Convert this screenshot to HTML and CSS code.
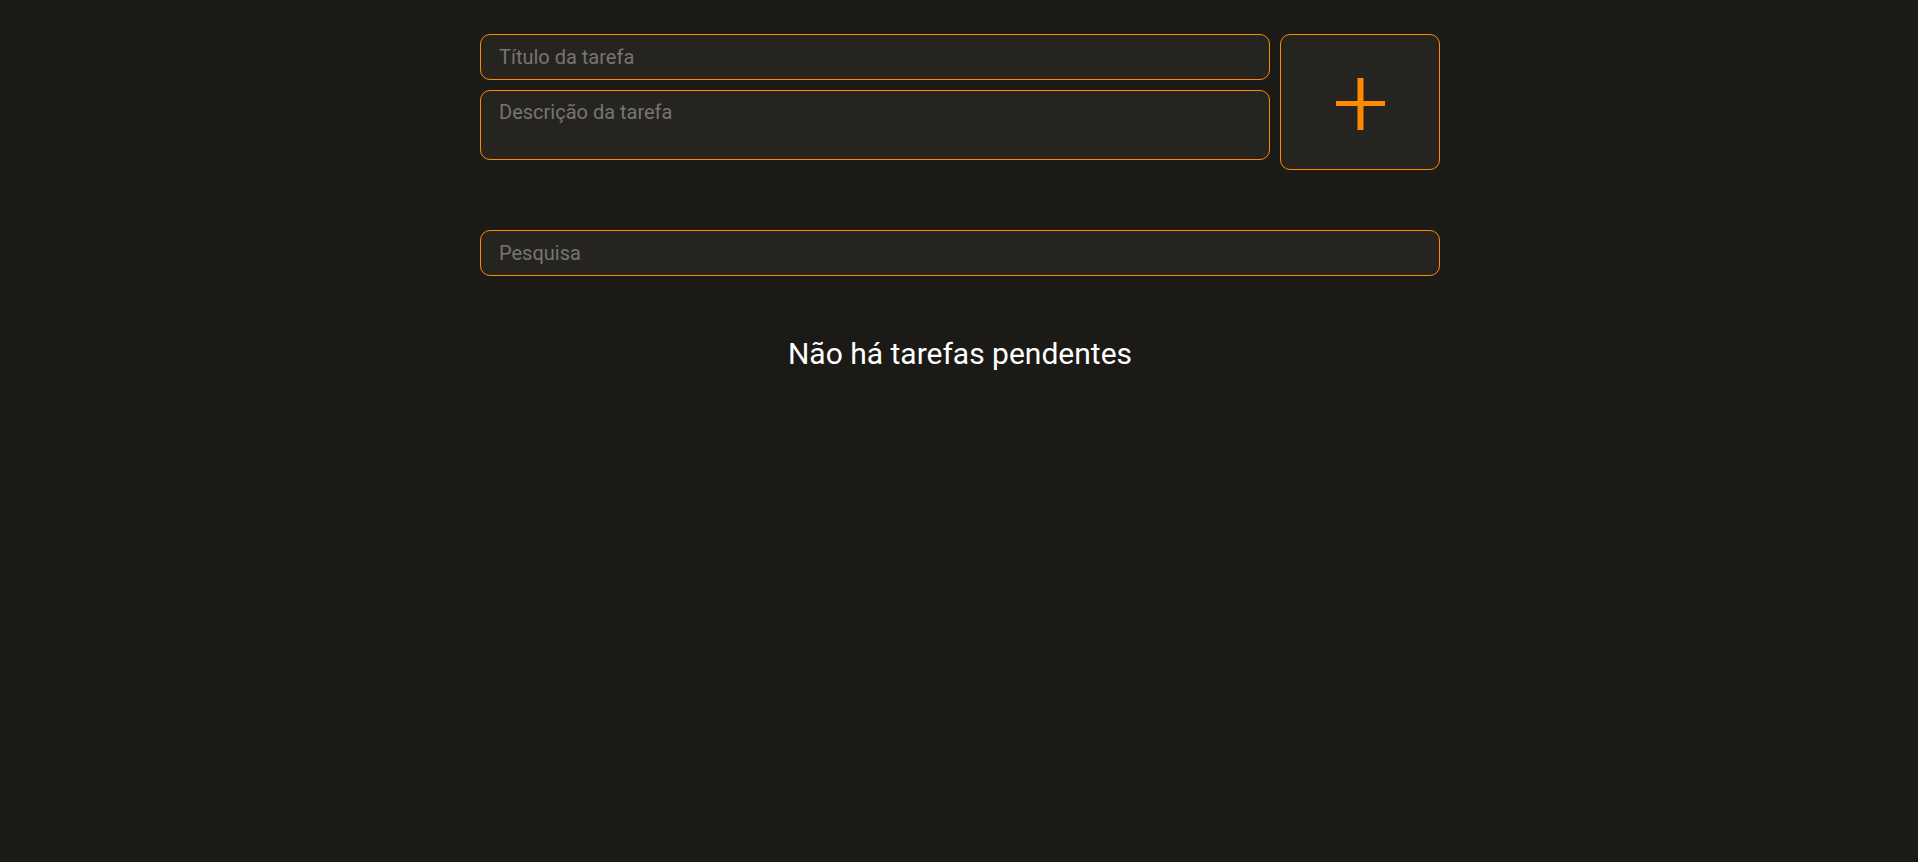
FILE: index.html
```html
<!DOCTYPE html>
<html lang="pt">
<head>
<meta charset="utf-8">
<title>Tarefas</title>
<link rel="stylesheet" href="styles.css">
</head>
<body>
<main class="app">
  <form class="new-task">
    <div class="fields">
      <input class="field title" type="text" placeholder="Título da tarefa">
      <textarea class="field desc" placeholder="Descrição da tarefa"></textarea>
    </div>
    <button class="add" type="button" aria-label="Adicionar">
      <svg width="49" height="52" viewBox="0 0 49 52"><rect x="0" y="23" width="49" height="5" fill="#ff8a00"/><rect x="21.5" y="0" width="6" height="52" fill="#ff8a00"/></svg>
    </button>
  </form>
  <input class="field search" type="text" placeholder="Pesquisa">
  <h2 class="empty">Não há tarefas pendentes</h2>
</main>
</body>
</html>
```
FILE: styles.css
```css
* { box-sizing: border-box; }
html, body {
  margin: 0;
  background: #1c1a17;
  font-family: Roboto, "Liberation Sans", sans-serif;
}
body { padding-left: 2px; }
.app {
  width: 960px;
  margin: 0 auto;
  padding-top: 34px;
  display: flex;
  flex-direction: column;
}
.new-task {
  display: flex;
  gap: 10px;
  align-items: flex-start;
}
.fields {
  flex: 1;
  display: flex;
  flex-direction: column;
  gap: 10px;
}
.field {
  display: block;
  width: 100%;
  background: #262420;
  border: 1px solid #ff8a00;
  border-radius: 10px;
  color: #ddd;
  font-family: Roboto, "Liberation Sans", sans-serif;
  font-size: 20px;
  line-height: 23px;
  padding: 10.5px 18px;
  outline: none;
  margin: 0;
}
.field::placeholder { color: #77756f; }
.title { height: 46px; }
.desc {
  height: 70px;
  resize: none;
  padding-top: 9.5px;
}
.add {
  width: 160px;
  height: 136px;
  flex: none;
  background: #262420;
  border: 1px solid #ff8a00;
  border-radius: 10px;
  display: flex;
  align-items: center;
  justify-content: center;
  padding: 0;
  padding-top: 4px;
  cursor: pointer;
}
.search {
  margin-top: 60px;
  height: 46px;
}
.empty {
  margin: 60px 0 0;
  text-align: center;
  color: #ffffff;
  font-size: 30px;
  font-weight: 400;
  line-height: normal;
}
```
